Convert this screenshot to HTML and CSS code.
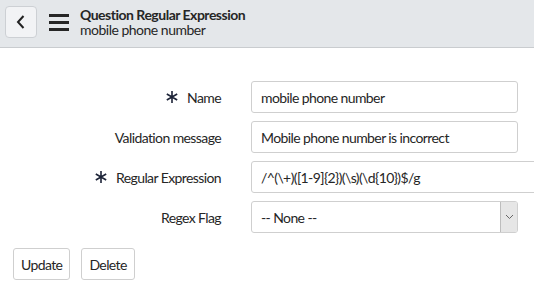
FILE: index.html
```html
<!DOCTYPE html>
<html lang="en">
<head>
  <meta charset="UTF-8">
  <title>Question Regular Expression</title>
  <link rel="stylesheet" href="styles.css">
</head>
<body>

  <header class="topbar">
    <button class="btn-voltar" type="button" aria-label="Back">
      <svg width="12" height="16" viewBox="0 0 12 16"><path d="M8.5 2 L3 8 L8.5 14" fill="none" stroke="#222" stroke-width="2"/></svg>
    </button>
    <span class="menu">
      <i></i><i></i><i></i>
    </span>
    <div class="titulo">
      <strong>Question Regular Expression</strong>
      <span>mobile phone number</span>
    </div>
  </header>

  <form class="formulario">
    <label class="rotulo obrigatorio">
      <svg class="asterisco" width="12" height="12" viewBox="0 0 12 12"><path d="M6 0 V12 M0.8 3 L11.2 9 M0.8 9 L11.2 3" stroke="#1d2438" stroke-width="1.6"/></svg>
      Name
    </label>
    <input class="campo" type="text" value="mobile phone number">

    <label class="rotulo">Validation message</label>
    <input class="campo" type="text" value="Mobile phone number is incorrect">

    <label class="rotulo obrigatorio">
      <svg class="asterisco" width="12" height="12" viewBox="0 0 12 12"><path d="M6 0 V12 M0.8 3 L11.2 9 M0.8 9 L11.2 3" stroke="#1d2438" stroke-width="1.6"/></svg>
      Regular Expression
    </label>
    <input class="campo largo" type="text" value="/^(\+)([1-9]{2})(\s)(\d{10})$/g">

    <label class="rotulo">Regex Flag</label>
    <div class="select">
      <span>-- None --</span>
      <span class="seta">
        <svg width="9" height="6" viewBox="0 0 9 6"><path d="M1 1 L4.5 4.5 L8 1" fill="none" stroke="#666" stroke-width="1"/></svg>
      </span>
    </div>
  </form>

  <div class="acoes">
    <button type="button">Update</button>
    <button type="button">Delete</button>
  </div>

</body>
</html>
```

FILE: styles.css
```css
body {
  margin: 0;
  font-family: Lato, "Noto Sans", sans-serif;
  font-size: 14px;
  color: #262626;
  background: #fff;
  overflow: hidden;
}

.topbar {
  display: flex;
  align-items: center;
  height: 47px;
  padding-left: 5px;
  background-color: #e4e7ea;
  border-bottom: 1px solid #c9cccf;
  box-sizing: content-box;
}

.btn-voltar {
  width: 32px;
  height: 32px;
  margin-top: -3px;
  display: flex;
  align-items: center;
  justify-content: center;
  background: #f2f3f5;
  border: 1px solid #cdd0d4;
  border-radius: 4px;
  padding: 0;
}

.menu {
  display: flex;
  flex-direction: column;
  gap: 4px;
  margin-left: 12px;
  margin-top: -2px;
}

.menu i {
  display: block;
  width: 20px;
  height: 3px;
  background: #262626;
}

.titulo {
  display: flex;
  flex-direction: column;
  margin-left: 11px;
  margin-top: -3px;
  line-height: 15px;
  letter-spacing: -0.5px;
}

.titulo strong {
  font-weight: bold;
}

.formulario {
  display: grid;
  grid-template-columns: 221px 267px;
  column-gap: 30px;
  row-gap: 8px;
  padding-top: 33px;
  align-items: center;
}

.rotulo {
  justify-self: end;
  display: flex;
  align-items: center;
  gap: 9px;
  letter-spacing: -0.6px;
}

.asterisco {
  display: block;
}

.campo {
  height: 32px;
  box-sizing: border-box;
  padding: 0 9px;
  border: 1px solid #cfcfcf;
  border-radius: 3px;
  font: inherit;
  color: #262626;
  letter-spacing: -0.6px;
}

.campo.largo {
  width: 300px;
}

.select {
  display: flex;
  height: 32px;
  box-sizing: border-box;
  border: 1px solid #cfcfcf;
  border-radius: 3px;
  align-items: center;
  justify-content: space-between;
  padding-left: 9px;
  letter-spacing: -0.6px;
}

.seta {
  width: 16px;
  height: 30px;
  display: flex;
  align-items: center;
  justify-content: center;
  background: #e6e6e6;
  border-left: 1px solid #bdbdbd;
  border-radius: 0 2px 2px 0;
}

.acoes {
  display: flex;
  gap: 11px;
  padding: 15px 0 0 13px;
}

.acoes button {
  height: 32px;
  padding: 0 7px;
  background: #fff;
  border: 1px solid #cfcfcf;
  border-radius: 3px;
  font: inherit;
  color: #262626;
  letter-spacing: -0.6px;
}
```
